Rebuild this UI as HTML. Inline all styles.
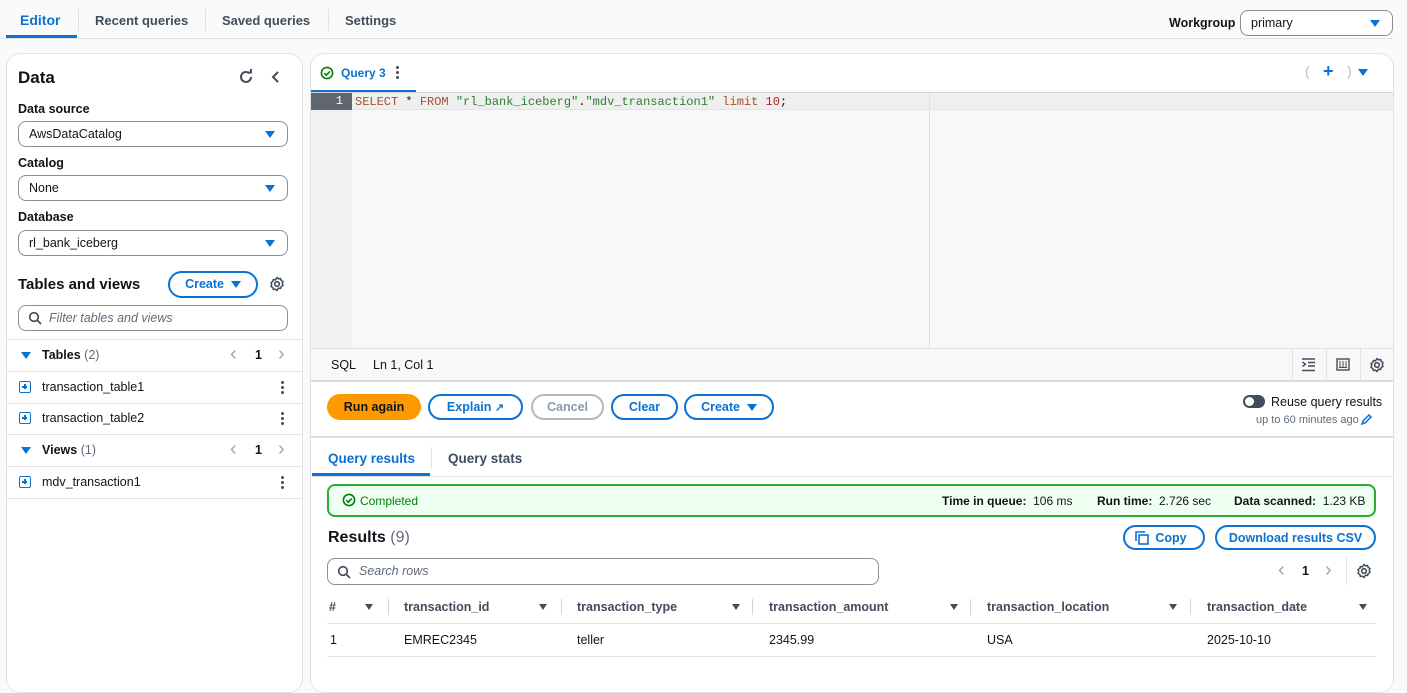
<!DOCTYPE html>
<html><head><meta charset="utf-8"><style>
*{box-sizing:border-box;margin:0;padding:0}
body{width:1407px;height:662px;overflow:hidden;background:#fafafa;font-family:"Liberation Sans",sans-serif;font-size:12.5px;color:#0f141a;position:relative}
.a{position:absolute}
.b{font-weight:bold}
.blue{color:#0972d3}
.sel{position:absolute;background:#fff;border:1px solid #8c8c94;border-radius:8px;height:26px;padding-left:10px;line-height:24px;font-size:12.5px}
.sel .tri{position:absolute;right:12px;top:9px;width:0;height:0;border-left:5px solid transparent;border-right:5px solid transparent;border-top:7px solid #0972d3}
.tri2{display:inline-block;width:0;height:0;border-left:5px solid transparent;border-right:5px solid transparent;border-top:7px solid #0972d3;vertical-align:middle}
.btn{position:absolute;border:2px solid #0972d3;border-radius:14px;color:#0972d3;font-weight:bold;text-align:center;line-height:23px;font-size:12.5px;background:#fff}
.hl{position:absolute;height:1px;background:#e2e2e6}
.ico{position:absolute;width:12px;height:12px;border:1.5px solid #0972d3;border-radius:2px}
.ico:before{content:"";position:absolute;left:2px;top:4px;width:5px;height:1.5px;background:#0972d3}
.ico:after{content:"";position:absolute;left:4px;top:2px;width:1.5px;height:5px;background:#0972d3}
.dots{position:absolute;width:3px}
.dots i{display:block;width:3px;height:3px;border-radius:50%;background:#414d5c;margin-bottom:2px}
.filt{position:absolute;width:0;height:0;border-left:4.5px solid transparent;border-right:4.5px solid transparent;border-top:6px solid #414d5c}
.vs{position:absolute;width:1px;height:16px;background:#d1d5db}
.gray{color:#5f6b7a}
.arr{position:absolute;font-size:20px;color:#9ba7b6;line-height:20px}
</style></head><body>
<div class="a b blue" style="left:20px;top:12px;font-size:14px">Editor</div>
<div class="a" style="left:6px;top:35px;width:71px;height:3px;background:#0972d3"></div>
<div class="a b" style="left:95px;top:13px;font-size:13px;color:#414d5c">Recent queries</div>
<div class="a b" style="left:222px;top:13px;font-size:13px;color:#414d5c">Saved queries</div>
<div class="a b" style="left:345px;top:13px;font-size:13px;color:#414d5c">Settings</div>
<div class="a" style="left:78px;top:9px;width:1px;height:22px;background:#e2e2e6"></div>
<div class="a" style="left:205px;top:9px;width:1px;height:22px;background:#e2e2e6"></div>
<div class="a" style="left:328px;top:9px;width:1px;height:22px;background:#e2e2e6"></div>
<div class="hl" style="left:0;top:38px;width:1393px"></div>
<div class="a b" style="left:1169px;top:16px">Workgroup</div>
<div class="sel" style="left:1240px;top:10px;width:153px">primary<span class="tri"></span></div>

<div class="a" style="left:6px;top:53px;width:297px;height:640px;background:#fff;border:1px solid #e2e2e6;border-radius:14px"></div>
<div class="a b" style="left:18px;top:68px;font-size:17px">Data</div>
<svg class="a" style="left:238px;top:69px" width="16" height="16" viewBox="0 0 16 16"><path d="M13 8a5 5 0 1 1-1.6-3.7" fill="none" stroke="#414d5c" stroke-width="2"/><path d="M9.5 3.5h3.5V0" fill="none" stroke="#414d5c" stroke-width="2"/></svg>
<svg class="a" style="left:270px;top:70px" width="12" height="14"><path d="M8 2L3 7l5 5" fill="none" stroke="#414d5c" stroke-width="2"/></svg>
<div class="a b" style="left:18px;top:102px">Data source</div>
<div class="sel" style="left:18px;top:121px;width:270px">AwsDataCatalog<span class="tri"></span></div>
<div class="a b" style="left:18px;top:156px">Catalog</div>
<div class="sel" style="left:18px;top:175px;width:270px">None<span class="tri"></span></div>
<div class="a b" style="left:18px;top:210px">Database</div>
<div class="sel" style="left:18px;top:230px;width:270px">rl_bank_iceberg<span class="tri"></span></div>
<div class="a b" style="left:18px;top:276px;font-size:15px">Tables and views</div>
<div class="btn" style="left:168px;top:271px;width:90px;height:27px">Create&nbsp; <span class="tri2"></span></div>
<svg class="a" style="left:269px;top:276px" width="16" height="16" viewBox="0 0 16 16"><circle cx="8" cy="8" r="2.3" fill="none" stroke="#414d5c" stroke-width="1.6"/><path d="M8 1.5l1.6 1.4 2-.4.6 2 1.8 1-.7 2 .7 2-1.8 1-.6 2-2-.4L8 14.5l-1.6-1.4-2 .4-.6-2-1.8-1 .7-2-.7-2 1.8-1 .6-2 2 .4z" fill="none" stroke="#414d5c" stroke-width="1.5" stroke-linejoin="round"/></svg>
<div class="sel" style="left:18px;top:305px;width:270px;padding-left:30px;font-style:italic;color:#5f6b7a">Filter tables and views</div>
<svg class="a" style="left:28px;top:311px" width="14" height="14"><circle cx="6" cy="6" r="4.3" fill="none" stroke="#414d5c" stroke-width="1.7"/><path d="M9 9l4 4" stroke="#414d5c" stroke-width="1.8"/></svg>
<div class="hl" style="left:7px;top:339px;width:295px"></div>
<div class="filt" style="left:21px;top:352px;border-top-color:#0972d3;border-left-width:5px;border-right-width:5px;border-top-width:7px"></div>
<div class="a" style="left:42px;top:348px"><b>Tables</b> <span class="gray">(2)</span></div>
<div class="arr" style="left:230px;top:344px">&lsaquo;</div>
<div class="a b" style="left:255px;top:348px">1</div>
<div class="arr" style="left:278px;top:344px">&rsaquo;</div>
<div class="hl" style="left:7px;top:371px;width:295px"></div>
<div class="ico" style="left:19px;top:381px"></div>
<div class="a" style="left:42px;top:380px">transaction_table1</div>
<div class="dots" style="left:281px;top:381px"><i></i><i></i><i></i></div>
<div class="hl" style="left:7px;top:403px;width:295px"></div>
<div class="ico" style="left:19px;top:412px"></div>
<div class="a" style="left:42px;top:411px">transaction_table2</div>
<div class="dots" style="left:281px;top:412px"><i></i><i></i><i></i></div>
<div class="hl" style="left:7px;top:434px;width:295px"></div>
<div class="filt" style="left:21px;top:447px;border-top-color:#0972d3;border-left-width:5px;border-right-width:5px;border-top-width:7px"></div>
<div class="a" style="left:42px;top:443px"><b>Views</b> <span class="gray">(1)</span></div>
<div class="arr" style="left:230px;top:439px">&lsaquo;</div>
<div class="a b" style="left:255px;top:443px">1</div>
<div class="arr" style="left:278px;top:439px">&rsaquo;</div>
<div class="hl" style="left:7px;top:466px;width:295px"></div>
<div class="ico" style="left:19px;top:476px"></div>
<div class="a" style="left:42px;top:475px">mdv_transaction1</div>
<div class="dots" style="left:281px;top:476px"><i></i><i></i><i></i></div>
<div class="hl" style="left:7px;top:498px;width:295px"></div>

<div class="a" style="left:310px;top:53px;width:1084px;height:640px;background:#fff;border:1px solid #e2e2e6;border-radius:14px"></div>
<svg class="a" style="left:320px;top:66px" width="14" height="14"><circle cx="7" cy="7" r="5.6" fill="none" stroke="#037f0c" stroke-width="1.6"/><path d="M4.3 7.2l2 2 3.5-3.8" fill="none" stroke="#037f0c" stroke-width="1.6"/></svg>
<div class="a b blue" style="left:341px;top:66px;font-size:12px">Query 3</div>
<div class="dots" style="left:396px;top:66px"><i></i><i></i><i></i></div>
<div class="a" style="left:311px;top:90px;width:105px;height:2px;background:#0972d3"></div>
<div class="a" style="left:1305px;top:63px;color:#b4b9c0;font-size:14px">(</div>
<div class="a b blue" style="left:1323px;top:61px;font-size:18px">+</div>
<div class="a" style="left:1347px;top:63px;color:#b4b9c0;font-size:14px">)</div>
<div class="filt" style="left:1358px;top:69px;border-top-color:#0972d3;border-left-width:5px;border-right-width:5px;border-top-width:7px"></div>
<div class="a" style="left:311px;top:92px;width:1082px;height:256px;background:#f8f8f8;border-top:1px solid #d5d5d8"></div>
<div class="a" style="left:311px;top:93px;width:41px;height:255px;background:#f2f2f2"></div>
<div class="a" style="left:311px;top:93px;width:1082px;height:17px;background:#efefef;border-bottom:1px solid #e4e4e4"></div>
<div class="a" style="left:311px;top:93px;width:41px;height:17px;background:#5f6670;color:#fff;text-align:right;padding-right:9px;font-family:'Liberation Mono',monospace;font-size:12px;line-height:17px">1</div>
<div class="a" style="left:929px;top:93px;width:1px;height:255px;background:#e0e0e0"></div>
<div class="a" style="left:355px;top:94px;font-family:'Liberation Mono',monospace;font-size:12px;line-height:16px;white-space:pre"><span style="color:#a0522d">SELECT</span> * <span style="color:#a0522d">FROM</span> <span style="color:#2e7d32">"rl_bank_iceberg"</span>.<span style="color:#2e7d32">"mdv_transaction1"</span> <span style="color:#a0522d">limit</span> <span style="color:#b22222">10</span>;</div>
<div class="a" style="left:311px;top:348px;width:1082px;height:34px;background:#f8f8f8;border-top:1px solid #e2e2e6;border-bottom:2px solid #dcdce0"></div>
<div class="a" style="left:331px;top:358px">SQL</div>
<div class="a" style="left:373px;top:358px">Ln 1, Col 1</div>
<div class="a" style="left:1292px;top:349px;width:1px;height:32px;background:#e2e2e6"></div>
<div class="a" style="left:1326px;top:349px;width:1px;height:32px;background:#e2e2e6"></div>
<div class="a" style="left:1360px;top:349px;width:1px;height:32px;background:#e2e2e6"></div>
<svg class="a" style="left:1301px;top:358px" width="15" height="14"><path d="M1 1h13M7 4.5h7M7 8h7M1 12.5h13M1.5 4l3 2.2-3 2.2" fill="none" stroke="#414d5c" stroke-width="1.4"/></svg>
<svg class="a" style="left:1336px;top:358px" width="14" height="13"><rect x="1" y="1" width="12" height="11" fill="none" stroke="#414d5c" stroke-width="1.4"/><path d="M4 3v6M7 3v6M10 3v6M3 9.5h8" stroke="#414d5c" stroke-width="1"/></svg>
<svg class="a" style="left:1369px;top:357px" width="16" height="16" viewBox="0 0 16 16"><circle cx="8" cy="8" r="2.3" fill="none" stroke="#414d5c" stroke-width="1.6"/><path d="M8 1.5l1.6 1.4 2-.4.6 2 1.8 1-.7 2 .7 2-1.8 1-.6 2-2-.4L8 14.5l-1.6-1.4-2 .4-.6-2-1.8-1 .7-2-.7-2 1.8-1 .6-2 2 .4z" fill="none" stroke="#414d5c" stroke-width="1.5" stroke-linejoin="round"/></svg>
<div class="a b" style="left:327px;top:394px;width:94px;height:26px;background:#ff9900;border-radius:13px;text-align:center;line-height:26px">Run again</div>
<div class="btn" style="left:428px;top:394px;width:95px;height:26px">Explain <span style="font-size:11px">&#x2197;</span></div>
<div class="btn" style="left:531px;top:394px;width:73px;height:26px;border-color:#b4b9c0;color:#8d99a8">Cancel</div>
<div class="btn" style="left:611px;top:394px;width:67px;height:26px">Clear</div>
<div class="btn" style="left:684px;top:394px;width:90px;height:26px">Create&nbsp; <span class="tri2"></span></div>
<div class="a" style="left:1243px;top:395px;width:22px;height:13px;border-radius:7px;background:#414d5c"></div>
<div class="a" style="left:1245px;top:397px;width:9px;height:9px;border-radius:50%;background:#fff"></div>
<div class="a" style="left:1271px;top:395px">Reuse query results</div>
<div class="a gray" style="left:1256px;top:414px;font-size:11px">up to 60 minutes ago</div>
<svg class="a" style="left:1360px;top:413px" width="13" height="13"><path d="M2 11l1-3 6-6 2 2-6 6z" fill="none" stroke="#0972d3" stroke-width="1.5"/></svg>
<div class="a" style="left:311px;top:436px;width:1082px;height:2px;background:#dcdce0"></div>
<div class="a b blue" style="left:328px;top:451px;font-size:13.5px">Query results</div>
<div class="a b" style="left:448px;top:451px;font-size:13.5px;color:#414d5c">Query stats</div>
<div class="a" style="left:431px;top:447px;width:1px;height:22px;background:#e2e2e6"></div>
<div class="a" style="left:312px;top:473px;width:118px;height:3px;background:#0972d3"></div>
<div class="hl" style="left:311px;top:476px;width:1082px"></div>
<div class="a" style="left:327px;top:484px;width:1049px;height:33px;border:2px solid #29ad32;background:#effff1;border-radius:8px"></div>
<svg class="a" style="left:342px;top:493px" width="14" height="14"><circle cx="7" cy="7" r="5.6" fill="none" stroke="#037f0c" stroke-width="1.6"/><path d="M4.3 7.2l2 2 3.5-3.8" fill="none" stroke="#037f0c" stroke-width="1.6"/></svg>
<div class="a" style="left:360px;top:494px;color:#037f0c;font-size:12px">Completed</div>
<div class="a" style="left:942px;top:494px;font-size:12px"><b>Time in queue:</b>&nbsp; 106 ms</div>
<div class="a" style="left:1097px;top:494px;font-size:12px"><b>Run time:</b>&nbsp; 2.726 sec</div>
<div class="a" style="left:1234px;top:494px;font-size:12px"><b>Data scanned:</b>&nbsp; 1.23 KB</div>
<div class="a" style="left:328px;top:529px;font-size:16px"><b>Results</b> <span class="gray">(9)</span></div>
<div class="btn" style="left:1123px;top:525px;width:82px;height:25px">&nbsp; &nbsp; Copy</div>
<svg class="a" style="left:1135px;top:531px" width="14" height="14"><path d="M1 10V1h9" fill="none" stroke="#0972d3" stroke-width="1.6"/><rect x="4" y="4" width="9" height="9" fill="none" stroke="#0972d3" stroke-width="1.6"/></svg>
<div class="btn" style="left:1215px;top:525px;width:161px;height:25px">Download results CSV</div>
<div class="sel" style="left:327px;top:558px;width:552px;height:27px;padding-left:31px;font-style:italic;color:#5f6b7a">Search rows</div>
<svg class="a" style="left:337px;top:565px" width="14" height="14"><circle cx="6" cy="6" r="4.3" fill="none" stroke="#414d5c" stroke-width="1.7"/><path d="M9 9l4 4" stroke="#414d5c" stroke-width="1.8"/></svg>
<div class="arr" style="left:1278px;top:560px">&lsaquo;</div>
<div class="a b" style="left:1302px;top:564px">1</div>
<div class="arr" style="left:1325px;top:560px">&rsaquo;</div>
<div class="a" style="left:1346px;top:557px;width:1px;height:28px;background:#e2e2e6"></div>
<svg class="a" style="left:1356px;top:563px" width="16" height="16" viewBox="0 0 16 16"><circle cx="8" cy="8" r="2.3" fill="none" stroke="#414d5c" stroke-width="1.6"/><path d="M8 1.5l1.6 1.4 2-.4.6 2 1.8 1-.7 2 .7 2-1.8 1-.6 2-2-.4L8 14.5l-1.6-1.4-2 .4-.6-2-1.8-1 .7-2-.7-2 1.8-1 .6-2 2 .4z" fill="none" stroke="#414d5c" stroke-width="1.5" stroke-linejoin="round"/></svg>
<div class="a b" style="left:329px;top:600px;color:#414d5c">#</div>
<div class="filt" style="left:365px;top:604px"></div><div class="vs" style="left:388px;top:599px"></div>
<div class="a b" style="left:404px;top:600px;color:#414d5c">transaction_id</div>
<div class="filt" style="left:539px;top:604px"></div><div class="vs" style="left:561px;top:599px"></div>
<div class="a b" style="left:577px;top:600px;color:#414d5c">transaction_type</div>
<div class="filt" style="left:732px;top:604px"></div><div class="vs" style="left:752px;top:599px"></div>
<div class="a b" style="left:769px;top:600px;color:#414d5c">transaction_amount</div>
<div class="filt" style="left:950px;top:604px"></div><div class="vs" style="left:970px;top:599px"></div>
<div class="a b" style="left:987px;top:600px;color:#414d5c">transaction_location</div>
<div class="filt" style="left:1169px;top:604px"></div><div class="vs" style="left:1190px;top:599px"></div>
<div class="a b" style="left:1207px;top:600px;color:#414d5c">transaction_date</div>
<div class="filt" style="left:1359px;top:604px"></div>
<div class="hl" style="left:327px;top:623px;width:1049px"></div>
<div class="a" style="left:330px;top:633px">1</div>
<div class="a" style="left:404px;top:633px">EMREC2345</div>
<div class="a" style="left:577px;top:633px">teller</div>
<div class="a" style="left:769px;top:633px">2345.99</div>
<div class="a" style="left:987px;top:633px">USA</div>
<div class="a" style="left:1207px;top:633px">2025-10-10</div>
<div class="hl" style="left:327px;top:656px;width:1049px"></div>
</body></html>
